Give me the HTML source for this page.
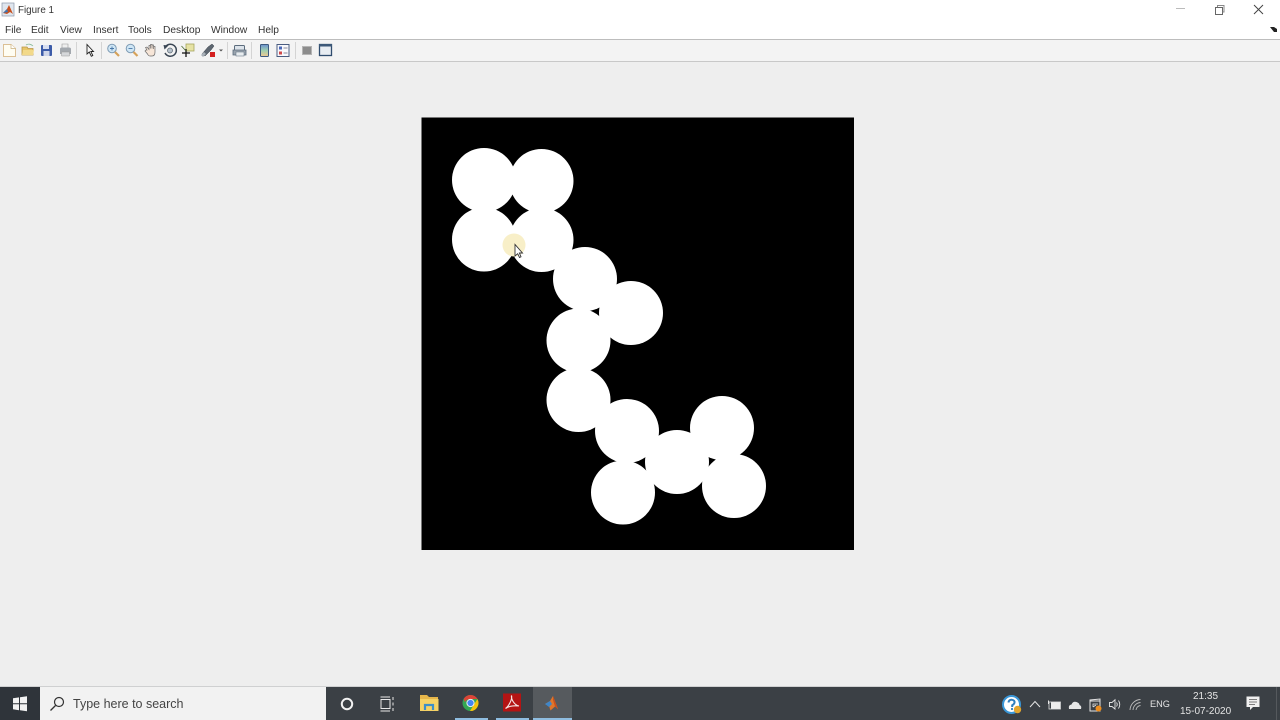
<!DOCTYPE html>
<html><head><meta charset="utf-8"><style>
html,body{margin:0;padding:0;width:1280px;height:720px;overflow:hidden;background:#eeeeee;font-family:"Liberation Sans",sans-serif}
.a{position:absolute;white-space:nowrap}
.m{top:23.5px;font-size:10.2px;color:#333;line-height:13px}
.s{position:absolute;top:42px;width:1px;height:17px;background:#d4d4d4}
.b{filter:blur(.35px)}
</style></head><body>
<div class="a" style="left:0;top:0;width:1280px;height:39px;background:#fff"></div>
<div class="a" style="left:0;top:39px;width:1280px;height:1px;background:#bdbdbd"></div>
<div class="a" style="left:0;top:40px;width:1280px;height:21px;background:#f3f3f3"></div>
<div class="a" style="left:0;top:61px;width:1280px;height:1px;background:#c8c8c8"></div>
<div class="a" style="left:18px;top:4px;font-size:9.800px;color:#333;line-height:14px">Figure 1</div>
<div class="a m" style="left:5px">File</div>
<div class="a m" style="left:31px">Edit</div>
<div class="a m" style="left:60px">View</div>
<div class="a m" style="left:93px">Insert</div>
<div class="a m" style="left:128px">Tools</div>
<div class="a m" style="left:163px">Desktop</div>
<div class="a m" style="left:211px">Window</div>
<div class="a m" style="left:258px">Help</div>
<div class="s" style="left:76px"></div><div class="s" style="left:101px"></div><div class="s" style="left:227px"></div><div class="s" style="left:251px"></div><div class="s" style="left:295px"></div>

<svg class="a b" style="left:0;top:0" width="1280" height="64" viewBox="0 0 1280 64">
<!-- title icon -->
<rect x="2" y="3" width="12" height="13" fill="#dfe6ee" stroke="#8a98a8" stroke-width=".7"/>
<path d="M3 13L7 9L9 5L13 14L10 12L7 14Z" fill="#c8501e"/><path d="M3 13L7 9L8 12Z" fill="#3d77b5"/>
<!-- window controls -->
<path d="M1176 8.500H1185" stroke="#bbb" stroke-width="1"/>
<rect x="1215.500" y="7.500" width="7" height="7" fill="none" stroke="#666"/><path d="M1217.500 7V5.500H1224V12H1222.500" fill="none" stroke="#888"/>
<path d="M1254 5L1263 14M1263 5L1254 14" stroke="#444" stroke-width="1"/>
<path d="M1270 27L1274 27L1277 29V32H1274Z" fill="#222"/>
<!-- new -->
<path d="M3.500 44.500H11L15.500 48.500V56.500H3.500Z" fill="#fffdf2" stroke="#dcc095"/><path d="M11 44.500V48.500H15.500" fill="#fff" stroke="#c8b080" stroke-width=".7"/>
<!-- open -->
<path d="M22 47H27L28 48.500H33V55H22Z" fill="#e8c66a" stroke="#b99746" stroke-width=".8"/><path d="M26 45C28 43.500 31 44 33 46" stroke="#8b9" fill="none" stroke-width=".8"/><path d="M23 50H34L33 55H22Z" fill="#f2d98a"/>
<!-- save -->
<rect x="41" y="45" width="11" height="11" rx="1" fill="#3c5ba8"/><rect x="43" y="45" width="6" height="4" fill="#d7def0"/><rect x="43.500" y="51" width="6" height="5" fill="#cfd6ea"/>
<!-- print -->
<path d="M62 44H68V48H62Z" fill="#eee" stroke="#999" stroke-width=".6"/><path d="M60 49Q60 47.500 62 47.500H69Q71 47.500 71 49V54H60Z" fill="#a3a8ae"/><path d="M61.500 52H69.500V56H61.500Z" fill="#d5d7da" stroke="#999" stroke-width=".5"/>
<!-- pointer -->
<path d="M87 44.500V54L89.300 52L91.300 56.300L92.800 55.500L90.800 51.500H93.500Z" fill="#f8f8f8" stroke="#222" stroke-width=".9"/>
<!-- zoom in -->
<circle cx="112" cy="48.500" r="4.300" fill="#cfe6f5" stroke="#7f9cb5"/><path d="M115 52L119 56" stroke="#d6a25a" stroke-width="2.200"/><path d="M110 48.500H114M112 46.500V50.500" stroke="#4a78a8" stroke-width=".9"/>
<!-- zoom out -->
<circle cx="130.500" cy="48.500" r="4.300" fill="#cfe6f5" stroke="#7f9cb5"/><path d="M133.500 52L137.500 56" stroke="#d6a25a" stroke-width="2.200"/><path d="M128.500 48.500H132.500" stroke="#4a78a8" stroke-width=".9"/>
<!-- hand -->
<path d="M147 50L145.500 47.500L147 47L149 49.500V45.500H150.500V48.500V44.500H152V48.500V45H153.500V49V46.500H155V52Q155 56 152 56H150Q148.500 56 147.500 54L145 51L146 50Z" fill="#f7e6d8" stroke="#6b6b6b" stroke-width=".7"/>
<!-- rotate -->
<path d="M165 47.500A6 6 0 1 1 165 53" fill="none" stroke="#3a4654" stroke-width="1.500"/><path d="M163.500 45L168.500 45.500L164.500 49.500Z" fill="#3a4654"/><circle cx="170" cy="50.500" r="2.500" fill="#b7c2cc" stroke="#5a6672" stroke-width=".7"/>
<!-- data cursor -->
<rect x="186" y="44" width="8" height="7" fill="#e6e2a4" stroke="#a6a560" stroke-width=".8"/><path d="M182 53H190M186 49V57" stroke="#111" stroke-width="1.300"/><path d="M181.500 46L186 51" stroke="#4a6a30" stroke-width=".8"/>
<!-- brush -->
<path d="M202 54L208 47L212 44L214 46L211 50L205 56Z" fill="#5d6670" stroke="#3a424a" stroke-width=".5"/><path d="M201 55L204 52L206 54L203 57Z" fill="#a8b0b8"/><rect x="210" y="52" width="5" height="5" fill="#d42020"/>
<path d="M219 49.500H223L221 51.500Z" fill="#555"/>
<!-- print preview -->
<rect x="234.500" y="45.500" width="10" height="5" rx="1" fill="#dce3ea" stroke="#5b6b7c"/><path d="M233 50H246V55H233Z" fill="#9aa4ae" stroke="#5b6b7c" stroke-width=".8"/><rect x="236" y="52" width="8" height="4" fill="#e8ecef" stroke="#5b6b7c" stroke-width=".5"/>
<!-- colorbar -->
<defs><linearGradient id="cb" x1="0" y1="0" x2="0" y2="1"><stop offset="0" stop-color="#6a8fd0"/><stop offset=".5" stop-color="#9fd0b0"/><stop offset="1" stop-color="#f0c890"/></linearGradient></defs>
<rect x="260.500" y="44.500" width="8" height="12" rx=".7" fill="url(#cb)" stroke="#3d5a80"/>
<!-- legend -->
<rect x="277" y="44.500" width="12" height="12" fill="#f8f8fc" stroke="#4a5c80"/><rect x="279" y="46.500" width="3" height="3" fill="#4a68b8"/><rect x="279" y="51.500" width="3" height="3" fill="#d04848"/><path d="M283.500 48H287.500M283.500 53H287.500" stroke="#8a8a9a"/>
<!-- hide -->
<rect x="302.500" y="46.500" width="9" height="8" fill="#8c8c8c" stroke="#b5b5b5"/>
<!-- show -->
<rect x="319.500" y="44.500" width="12" height="11" fill="#e8edf2" stroke="#2f4c6e" stroke-width="1.300"/><rect x="319" y="44" width="13" height="2.500" fill="#3c5878"/>
</svg>

<svg class="a" style="left:0;top:0" width="1280" height="720" viewBox="0 0 1280 720">
<rect x="421.500" y="117.500" width="432.500" height="432.500" fill="#000"/>
<g fill="#fff">
<circle cx="484" cy="180" r="32"/><circle cx="541.500" cy="181" r="32"/><circle cx="484" cy="239.500" r="32"/><circle cx="541.500" cy="240" r="32"/>
<circle cx="585" cy="279" r="32"/><circle cx="631" cy="313" r="32"/><circle cx="578.500" cy="340.500" r="32"/><circle cx="578.500" cy="400" r="32"/>
<circle cx="627" cy="431" r="32"/><circle cx="677" cy="462" r="32"/><circle cx="722" cy="428" r="32"/><circle cx="734" cy="486" r="32"/><circle cx="623" cy="492.500" r="32"/>
</g>
<circle cx="514" cy="245" r="11.500" fill="#f8efc8"/>
<path d="M515 244.500V256L517.700 253.700L519.500 257.500L521 256.800L519.400 253H522.500Z" fill="#fff" stroke="#333" stroke-width=".9"/>
</svg>

<div class="a" style="left:0;top:687px;width:1280px;height:33px;background:#3b4045"></div>
<div class="a" style="left:0;top:686px;width:1280px;height:1px;background:#cfd0d1"></div>
<div class="a" style="left:0;top:687px;width:40px;height:33px;background:#2f343a"></div>
<div class="a" style="left:40px;top:687px;width:286px;height:33px;background:#f2f2f2"></div>
<div class="a" style="left:533px;top:687px;width:39px;height:33px;background:#565a5e"></div>
<div class="a" style="left:455px;top:718px;width:33px;height:2px;background:#8fbde0"></div>
<div class="a" style="left:496px;top:718px;width:33px;height:2px;background:#8fbde0"></div>
<div class="a" style="left:533px;top:718px;width:39px;height:2px;background:#8fbde0"></div>
<div class="a" style="left:73px;top:695.500px;font-size:12.500px;line-height:16px;color:#444">Type here to search</div>
<div class="a" style="left:1150px;top:697.500px;font-size:9.200px;line-height:13px;color:#e4e4e4">ENG</div>
<div class="a" style="left:1193px;top:690px;font-size:10px;line-height:13px;color:#e4e4e4">21:35</div>
<div class="a" style="left:1180px;top:705px;font-size:10px;line-height:13px;color:#e4e4e4">15-07-2020</div>

<svg class="a b" style="left:0;top:687px" width="1280" height="33" viewBox="0 687 1280 33">
<!-- windows logo -->
<path d="M13 698.300L19 697.400V703.300H13ZM20 697.200L27 696.200V703.300H20ZM13 704.300H19V710.200L13 709.300ZM20 704.300H27V711.300L20 710.300Z" fill="#f2f2f2"/>
<!-- search icon -->
<circle cx="59" cy="702" r="4.500" fill="none" stroke="#333" stroke-width="1.200"/><path d="M55.500 705.500L50.500 710.500" stroke="#333" stroke-width="1.300"/>
<!-- cortana -->
<circle cx="347" cy="704" r="5.200" fill="none" stroke="#f2f2f2" stroke-width="2"/>
<!-- task view -->
<path d="M380.500 697H390M380.500 711H390M381 699.500H390V708.500H381ZM393 697V700M393 702.500V705.500M393 708V711" fill="none" stroke="#e8e8e8" stroke-width="1"/>
<!-- explorer -->
<path d="M420 695H427L429 697H438V703H420Z" fill="#e6b64a"/><rect x="420" y="699" width="18.500" height="12" fill="#f5d265"/><path d="M425 710V705H433V710" fill="none" stroke="#3d8fc9" stroke-width="2.200"/>
<!-- chrome -->
<circle cx="470.500" cy="703" r="8" fill="#34a853"/><path d="M470.500 695A8 8 0 0 1 477.400 699H470.500Q466.500 699 464.800 702L463.700 698.800A8 8 0 0 1 470.500 695Z" fill="#dc4437"/><path d="M477.400 699A8 8 0 0 1 470 711L474 704.500Z" fill="#f4c20d"/><circle cx="470.500" cy="703" r="3.600" fill="#4285f4" stroke="#f0f0f0" stroke-width="1"/>
<!-- adobe -->
<rect x="503" y="693.500" width="18" height="18" fill="#b41414"/><path d="M505.500 708.500C509 706 512.500 699 511.500 695.500C511 699 514 705 519 706C514.500 705.500 509.500 705.500 505.500 708.500Z" fill="none" stroke="#f4e4e4" stroke-width="1.100"/>
<!-- matlab -->
<path d="M545 704L550 701L553 696L558 709L555 706.500L550.500 710.500L549 706Z" fill="#e0762a"/><path d="M545 704L550 701L552 704L549 707Z" fill="#3f86c8"/><path d="M553 696L558 709L555 706.500L553 700Z" fill="#c9501c"/>
<!-- help -->
<circle cx="1011.500" cy="704.500" r="8.500" fill="#fff" stroke="#3a97d8" stroke-width="2"/><path d="M1008.500 702.500Q1009 699.500 1012 699.800Q1015 700.300 1014.500 702.800Q1014 704.300 1012.200 705.300V707" fill="none" stroke="#2f7fbf" stroke-width="2"/><circle cx="1012" cy="709" r="1.100" fill="#2f7fbf"/><circle cx="1017.500" cy="709.500" r="3.700" fill="#e3a52e"/>
<!-- chevron -->
<path d="M1030 707L1035 701.500L1040 707" fill="none" stroke="#e4e4e4" stroke-width="1"/>
<!-- battery -->
<rect x="1051" y="702" width="9" height="7" fill="#ededed"/><rect x="1049" y="702" width="11.500" height="7" fill="none" stroke="#e0e0e0" stroke-width=".8"/><path d="M1048.500 700.500V704" stroke="#e8e8e8"/>
<!-- cloud -->
<path d="M1069 709Q1068 705 1071.500 704.500Q1073 701 1076.500 702Q1079.500 703 1079.500 705Q1082 706 1081 709Z" fill="#e6e6e6"/>
<!-- security -->
<path d="M1090 701H1100V699L1090 700ZM1090 701V711H1100V701" fill="none" stroke="#e4e4e4" stroke-width="1"/><path d="M1093 707V704H1098M1093 707L1096 705" stroke="#e4e4e4" fill="none" stroke-width=".8"/><circle cx="1098.500" cy="708.500" r="3" fill="#ee8e1f"/>
<!-- volume -->
<path d="M1109.500 702.500H1112L1115 699.800V709L1112 706.500H1109.500Z" fill="none" stroke="#e4e4e4" stroke-width=".9"/><path d="M1116.500 702.500Q1118 704.500 1116.500 706.500M1118.500 700.500Q1121 704.500 1118.500 708.500" fill="none" stroke="#e4e4e4" stroke-width=".9"/>
<!-- wifi -->
<path d="M1130 710A11 11 0 0 1 1140.500 699.500M1133 710A8 8 0 0 1 1140.500 702.500M1136 710A5 5 0 0 1 1140.500 705.500" fill="none" stroke="#bdbdbd" stroke-width=".9"/>
<!-- notifications -->
<path d="M1246.500 696.500H1259.500V707H1253L1250 710V707H1246.500Z" fill="#f0f0f0"/><path d="M1249 699.500H1257M1249 702H1257M1249 704.500H1255" stroke="#555" stroke-width=".8"/>
<rect x="1276" y="687" width="1" height="33" fill="#55595d"/>
</svg>
</body></html>
